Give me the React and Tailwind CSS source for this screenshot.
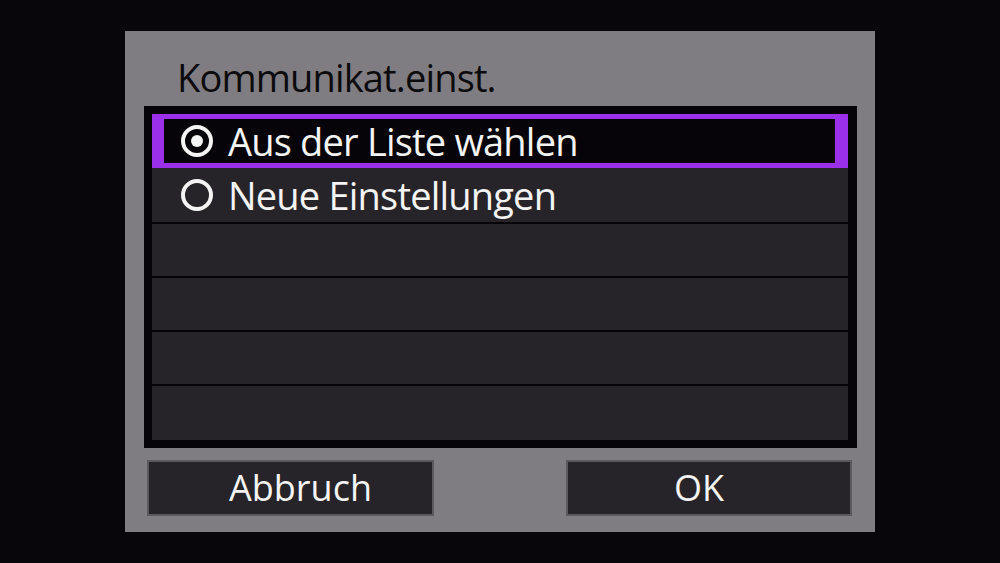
import { useState } from "react";

// label + row height; the first two rows sit flush, the rest are split by 2px lines
const rows = [
  { label: "Aus der Liste wählen", cls: "h-[54px]" },
  { label: "Neue Einstellungen", cls: "h-[54px]" },
  { label: "", cls: "h-[52px] mt-[2px]" },
  { label: "", cls: "h-[52px] mt-[2px]" },
  { label: "", cls: "h-[52px] mt-[2px]" },
  { label: "", cls: "h-[54px] mt-[2px]" },
];

const Radio = ({ checked }) => (
  <svg width="34" height="34" viewBox="0 0 34 34" className="shrink-0">
    <circle cx="17" cy="17" r="14" fill="none" stroke="#f4f4f4" strokeWidth="4" />
    {checked && <circle cx="17" cy="17" r="6" fill="#f4f4f4" />}
  </svg>
);

const App = () => {
  const [selected] = useState(0);

  return (
    <div
      className="w-[1000px] h-[563px] bg-[#08060a] flex items-center justify-center"
      style={{ fontFamily: '"Open Sans", "Noto Sans", sans-serif' }}
    >
      {/* ===== DIALOG ===== */}
      <div className="w-[750px] h-[501px] bg-[#7f7d81] flex flex-col">
        <div className="h-[75px] pl-[52px] flex items-end pb-[10px]">
          <h1 className="text-[38px] leading-none text-[#0b0a0c] tracking-[-0.85px]">
            Kommunikat.einst.
          </h1>
        </div>

        {/* ===== LIST ===== */}
        <div className="ml-[19px] w-[713px] h-[342px] bg-[#060408] pl-[8px] pr-[9px] py-[8px] flex flex-col">
          {rows.map((row, i) =>
            i === selected ? (
              <div
                key={i}
                className={"shrink-0 bg-[#9b30ea] pl-[12px] pr-[13px] py-[5px] " + row.cls}
              >
                <div className="h-full bg-[#060408] flex items-center pl-[16px] gap-[14px]">
                  <Radio checked />
                  <span className="text-[38px] leading-none text-[#f4f4f4] tracking-[-0.8px]">
                    {row.label}
                  </span>
                </div>
              </div>
            ) : (
              <div
                key={i}
                className={"shrink-0 bg-[#262428] flex items-center pl-[28px] gap-[14px] " + row.cls}
              >
                {row.label && (
                  <>
                    <Radio />
                    <span className="text-[38px] leading-none text-[#f4f4f4] tracking-[-0.8px]">
                      {row.label}
                    </span>
                  </>
                )}
              </div>
            )
          )}
        </div>

        {/* ===== BUTTONS ===== */}
        <div className="flex justify-between pl-[22px] pr-[23px] mt-[12px]">
          <button className="w-[287px] h-[56px] bg-[#262428] border-2 border-[#5b595d] pl-[20px] text-[36px] leading-none text-[#f4f4f4]">
            Abbruch
          </button>
          <button className="w-[286px] h-[56px] bg-[#262428] border-2 border-[#5b595d] pr-[20px] text-[36px] leading-none text-[#f4f4f4]">
            OK
          </button>
        </div>
      </div>
    </div>
  );
};

export default App;
